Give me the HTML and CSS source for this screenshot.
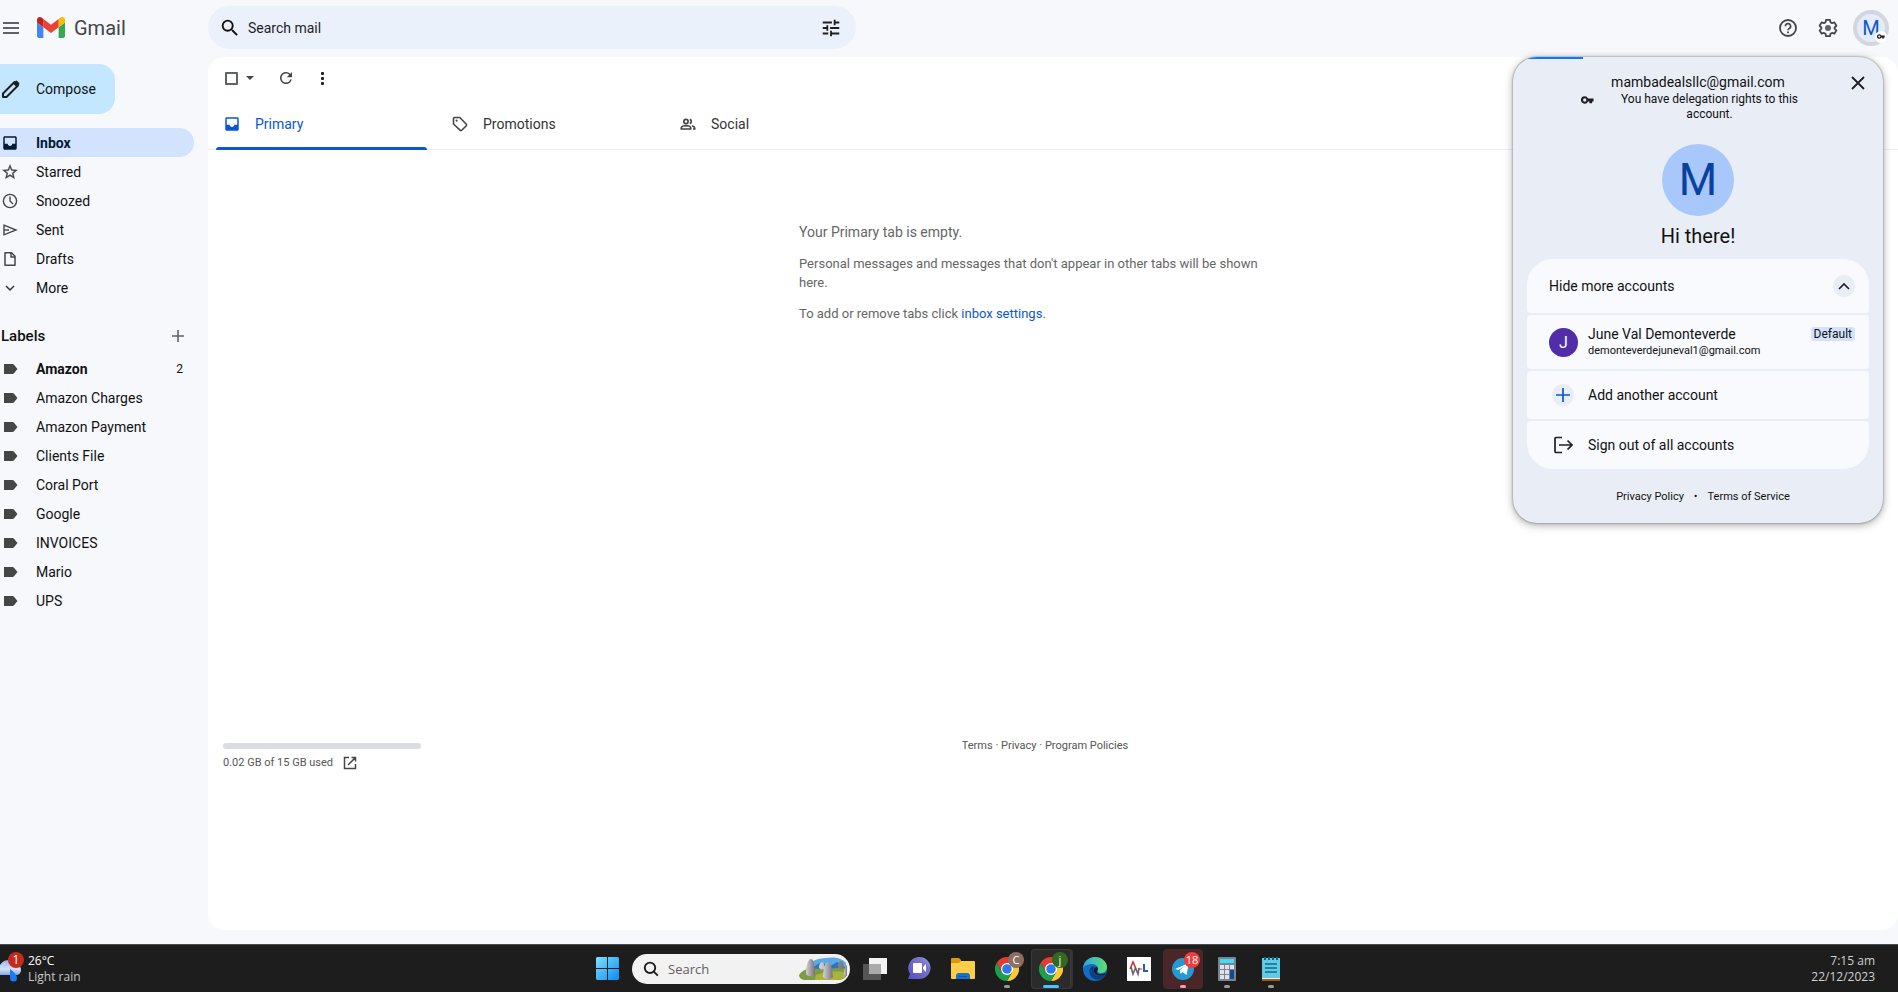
FILE: index.html
```html
<!DOCTYPE html>
<html lang="en">
<head>
<meta charset="utf-8">
<title>Gmail</title>
<link rel="stylesheet" href="styles.css">
</head>
<body>
<svg class="defs" aria-hidden="true">
  <defs>
    <symbol id="label" viewBox="0 0 18 18"><path d="M3 4h8.600c.6 0 1.100.3 1.400.8L16.500 9 13 13.200c-.3.500-.8.800-1.400.8H3V4z" fill="#444746"/></symbol>
    <symbol id="inbox" viewBox="0 0 24 24"><path d="M19 3H5c-1.100 0-2 .9-2 2v14c0 1.100.9 2 2 2h14c1.100 0 2-.9 2-2V5c0-1.100-.9-2-2-2zm0 10h-4c0 1.660-1.340 3-3 3s-3-1.340-3-3H5V5h14v8z" fill="currentColor"/></symbol>
    <symbol id="search" viewBox="0 0 24 24"><path d="M15.500 14h-.79l-.28-.27A6.471 6.471 0 0 0 16 9.500 6.500 6.500 0 1 0 9.500 16c1.610 0 3.090-.59 4.230-1.570l.27.28v.79l5 4.990L20.490 19l-4.990-5zm-6 0C7.010 14 5 11.990 5 9.500S7.010 5 9.500 5 14 7.010 14 9.500 11.990 14 9.500 14z" fill="currentColor"/></symbol>
    <symbol id="key" viewBox="0 0 14 8"><path d="M4 0a4 4 0 1 0 3.600 5.600H9V7.500h3V5.600h1.500V2.400H7.600A4 4 0 0 0 4 0zm0 2.200a1.800 1.800 0 1 1 0 3.600 1.800 1.800 0 0 1 0-3.600z" fill="#1f1f1f"/></symbol>
    <symbol id="chrome" viewBox="0 0 48 48">
      <path d="M24 12h20.800A24 24 0 0 0 3.200 12l10.400 18z" fill="#e33b2e"/>
      <path d="M34.400 30 24 48a24 24 0 0 0 20.800-36H24z" fill="#fcc934"/>
      <path d="M13.600 30 3.200 12A24 24 0 0 0 24 48l10.400-18z" fill="#1e9e48"/>
      <circle cx="24" cy="24" r="12" fill="#fff"/><circle cx="24" cy="24" r="9.500" fill="#2b79ea"/>
    </symbol>
  </defs>
</svg>
<div class="app">
  <header class="topbar">
    <div class="brand">
      <button class="plain" aria-label="Main menu"><svg width="18" height="18" viewBox="0 0 18 18"><path d="M1 4h16M1 9h16M1 14h16" stroke="#5f6368" stroke-width="2"/></svg></button>
      <a class="logo" href="#"><svg width="28" height="21" viewBox="52 42 88 66"><path fill="#4285f4" d="M58 108h14V74L52 59v43c0 3.320 2.690 6 6 6"/><path fill="#34a853" d="M120 108h14c3.320 0 6-2.690 6-6V59l-20 15"/><path fill="#fbbc04" d="M120 48v26l20-15v-8c0-7.420-8.470-11.650-14.400-7.200"/><path fill="#ea4335" d="M72 74V48l24 18 24-18v26L96 92"/><path fill="#c5221f" d="M52 51v8l20 15V48l-5.600-4.200c-5.940-4.450-14.400-.22-14.400 7.200"/></svg><span>Gmail</span></a>
    </div>
    <form class="search">
      <button class="plain" type="button" aria-label="Search"><svg width="22" height="22"><use href="#search"/></svg></button>
      <input type="text" placeholder="Search mail" aria-label="Search mail">
      <button class="plain" type="button" aria-label="Search options"><svg width="22" height="22" viewBox="0 0 24 24"><path d="M3 17v2h6v-2H3zM3 5v2h10V5H3zm10 16v-2h8v-2h-8v-2h-2v6h2zM7 9v2H3v2h4v2h2V9H7zm14 4v-2H11v2h10zm-6-4h2V7h4V5h-4V3h-2v6z" fill="#1f1f1f"/></svg></button>
    </form>
    <div class="tools">
      <button class="plain" aria-label="Support"><svg width="20" height="20" viewBox="0 0 20 20" fill="none" stroke="#444746"><circle cx="10" cy="10" r="8" stroke-width="1.800"/><path d="M7.400 8.200a2.600 2.600 0 1 1 3.900 2.200c-.9.600-1.300 1-1.300 1.900" stroke-width="1.700"/><path d="M10 13.400v1.800" stroke-width="1.800"/></svg></button>
      <button class="plain" aria-label="Settings"><svg width="20" height="20" viewBox="0 0 20 20"><path d="M8 1.900h4l.5 2.400 1.500.9 2.400-.8 2 3.400-1.800 1.700v1.200l1.800 1.600-2 3.400-2.400-.8-1.500.9-.5 2.400H8l-.5-2.400-1.500-.9-2.400.8-2-3.400 1.800-1.600V9.500L1.600 7.800l2-3.400 2.400.8 1.500-.9z" fill="none" stroke="#444746" stroke-width="1.800" stroke-linejoin="round"/><circle cx="10" cy="10" r="3" fill="#5f6368"/></svg></button>
      <button class="avatar-btn" aria-label="Google Account">M<span class="key-badge"><svg width="8" height="5"><use href="#key"/></svg></span></button>
    </div>
  </header>

  <div class="body">
    <nav class="side">
      <button class="compose"><svg width="20" height="20" viewBox="0 0 20 20"><path d="M2 18v-3.500L13.500 3l3.500 3.500L5.500 18z" fill="none" stroke="#1f1f1f" stroke-width="2" stroke-linejoin="round"/><path d="m12 4.500 2.500-2.500a1.300 1.300 0 0 1 1.800 0L18 3.700a1.300 1.300 0 0 1 0 1.800L15.500 8z" fill="#1f1f1f"/></svg>Compose</button>
      <ul class="list">
        <li><a class="row active" href="#"><svg width="18" height="18"><use href="#inbox"/></svg>Inbox</a></li>
        <li><a class="row" href="#"><svg width="18" height="18" viewBox="0 0 24 24"><path d="m22 9.240-7.190-.62L12 2 9.190 8.630 2 9.240l5.460 4.730L5.820 21 12 17.270 18.180 21l-1.630-7.030L22 9.240zM12 15.400l-3.760 2.270 1-4.280-3.320-2.880 4.380-.38L12 6.100l1.710 4.040 4.380.38-3.320 2.880 1 4.280L12 15.400z" fill="#444746" stroke="#444746" stroke-width=".4"/></svg>Starred</a></li>
        <li><a class="row" href="#"><svg width="18" height="18" viewBox="0 0 18 18" fill="none" stroke="#444746"><circle cx="9" cy="9" r="6.600" stroke-width="1.400"/><path d="M9 4.500V9l3 3" stroke-width="1.400"/></svg>Snoozed</a></li>
        <li><a class="row" href="#"><svg width="18" height="18" viewBox="0 0 18 18" fill="none" stroke="#444746" stroke-width="1.400"><path d="M3 4.200 15 9 3 13.800z"/><path d="M3 9h5"/></svg>Sent</a></li>
        <li><a class="row" href="#"><svg width="18" height="18" viewBox="0 0 18 18" fill="none" stroke="#444746" stroke-width="1.500"><path d="M4 2.800h6.500L14 6.200v9H4z" stroke-linejoin="round"/><path d="M10 3v4h4"/></svg>Drafts</a></li>
        <li><a class="row" href="#"><svg width="18" height="18" viewBox="0 0 18 18" fill="none" stroke="#333" stroke-width="1.500"><path d="m5 7 4 4 4-4"/></svg>More</a></li>
      </ul>
      <div class="labels-head"><h2>Labels</h2><button class="plain" aria-label="Create new label"><svg width="12" height="12" viewBox="0 0 12 12"><path d="M6 0v12M0 6h12" stroke="#5f6368" stroke-width="1.600"/></svg></button></div>
      <ul class="list">
        <li><a class="row unread" href="#"><svg width="18" height="18"><use href="#label"/></svg>Amazon<span class="count">2</span></a></li>
        <li><a class="row" href="#"><svg width="18" height="18"><use href="#label"/></svg>Amazon Charges</a></li>
        <li><a class="row" href="#"><svg width="18" height="18"><use href="#label"/></svg>Amazon Payment</a></li>
        <li><a class="row" href="#"><svg width="18" height="18"><use href="#label"/></svg>Clients File</a></li>
        <li><a class="row" href="#"><svg width="18" height="18"><use href="#label"/></svg>Coral Port</a></li>
        <li><a class="row" href="#"><svg width="18" height="18"><use href="#label"/></svg>Google</a></li>
        <li><a class="row" href="#"><svg width="18" height="18"><use href="#label"/></svg>INVOICES</a></li>
        <li><a class="row" href="#"><svg width="18" height="18"><use href="#label"/></svg>Mario</a></li>
        <li><a class="row" href="#"><svg width="18" height="18"><use href="#label"/></svg>UPS</a></li>
      </ul>
    </nav>

    <main class="mail">
      <div class="toolbar">
        <input type="checkbox" class="check" aria-label="Select all">
        <button class="plain caret" aria-label="Select"><svg width="8" height="4" viewBox="0 0 8 4"><path d="M0 0h8L4 4z" fill="#444746"/></svg></button>
        <button class="plain refresh" aria-label="Refresh"><svg width="18" height="18" viewBox="0 0 24 24"><path d="M17.650 6.350A7.958 7.958 0 0 0 12 4c-4.420 0-7.990 3.580-7.990 8s3.570 8 7.990 8c3.730 0 6.840-2.550 7.730-6h-2.080A5.990 5.990 0 0 1 12 18c-3.310 0-6-2.690-6-6s2.690-6 6-6c1.660 0 3.140.69 4.220 1.780L13 11h7V4l-2.350 2.350z" fill="#444746"/></svg></button>
        <button class="plain more" aria-label="More"><svg width="18" height="18" viewBox="0 0 18 18" fill="#1f1f1f"><rect x="8" y="3" width="3" height="3" rx="1"/><rect x="8" y="8" width="3" height="3" rx="1"/><rect x="8" y="13" width="3" height="3" rx="1"/></svg></button>
      </div>
      <div class="tabs" role="tablist">
        <button class="tab selected" role="tab" aria-selected="true"><svg width="18" height="18"><use href="#inbox"/></svg>Primary</button>
        <button class="tab" role="tab"><svg width="18" height="18" viewBox="0 0 18 18"><path d="M2.500 3.500a1 1 0 0 1 1-1h5.300l6.500 6.800a1 1 0 0 1 0 1.400l-4.600 4.600a1 1 0 0 1-1.400 0L2.500 9z" fill="none" stroke="#444746" stroke-width="1.600"/><circle cx="5.600" cy="5.600" r="1.100" fill="#444746"/></svg>Promotions</button>
        <button class="tab" role="tab"><svg width="18" height="18" viewBox="0 0 18 18" fill="none" stroke="#444746" stroke-width="1.700"><circle cx="7" cy="6.500" r="2.100"/><path d="M2.300 14v-1.200c0-1.300 2.600-2.200 4.700-2.200s4.700.9 4.700 2.200V14z"/><path d="M10.800 4.400a2.200 2.200 0 0 1 0 4.200M13 10.800c1.500.5 2.700 1.100 2.700 2.100V14H14"/></svg>Social</button>
      </div>
      <div class="content">
        <section class="empty">
          <h1>Your Primary tab is empty.</h1>
          <p>Personal messages and messages that don't appear in other tabs will be shown here.</p>
          <p>To add or remove tabs click <a href="#">inbox settings</a>.</p>
        </section>
        <footer class="foot">
          <div class="storage">
            <div class="bar"></div>
            <a href="#">0.02 GB of 15 GB used <svg width="14" height="14" viewBox="0 0 14 14" fill="none" stroke="#444746" stroke-width="1.500"><path d="M6 1.500H1.500v11h11V8M8.500 1.500h4v4M12.500 1.500 5 9"/></svg></a>
          </div>
          <div class="legal"><a href="#">Terms</a> · <a href="#">Privacy</a> · <a href="#">Program Policies</a></div>
        </footer>
      </div>
    </main>
  </div>

  <section class="panel" aria-label="Account">
    <div class="progress"></div>
    <button class="plain close" aria-label="Close"><svg width="14" height="14" viewBox="0 0 14 14"><path d="m1 1 12 12M13 1 1 13" stroke="#1f1f1f" stroke-width="1.800"/></svg></button>
    <div class="email">mambadealsllc@gmail.com</div>
    <div class="delegate"><svg width="13" height="8"><use href="#key"/></svg><p>You have delegation rights to this account.</p></div>
    <div class="big-avatar">M</div>
    <div class="hi">Hi there!</div>
    <div class="cards">
      <button class="card tall">Hide more accounts<span class="round end"><svg width="12" height="8" viewBox="0 0 12 8"><path d="m1 7 5-5 5 5" fill="none" stroke="#1f1f1f" stroke-width="1.700"/></svg></span></button>
      <a class="card tall account" href="#"><span class="initial">J</span><span class="who"><span>June Val Demonteverde</span><small>demonteverdejuneval1@gmail.com</small></span><span class="default">Default</span></a>
      <a class="card" href="#"><span class="slot"><span class="round"><svg width="14" height="14" viewBox="0 0 14 14"><path d="M7 0v14M0 7h14" stroke="#0b57d0" stroke-width="1.700"/></svg></span></span>Add another account</a>
      <a class="card" href="#"><span class="slot"><svg width="20" height="18" viewBox="0 0 20 18" fill="none" stroke="#1f1f1f" stroke-width="1.700"><path d="M9 1.500H3a1 1 0 0 0-1 1v13a1 1 0 0 0 1 1h6M6 9h12.500M14.500 4.500 19 9l-4.500 4.500"/></svg></span>Sign out of all accounts</a>
    </div>
    <div class="panel-foot"><a href="#">Privacy Policy</a><span>•</span><a href="#">Terms of Service</a></div>
  </section>

  <footer class="taskbar">
    <button class="weather">
      <span class="cloud"><svg width="24" height="30" viewBox="0 0 24 30"><defs><linearGradient id="cl" x2="0" y2="1"><stop stop-color="#93b8f0"/><stop offset=".6" stop-color="#d5e3f9"/><stop offset="1" stop-color="#7fa8ee"/></linearGradient></defs><path d="M0 11C3 6 8 5 12 8c3 1 9 2 9 8 0 3-2 5-5 5H0z" fill="url(#cl)"/><path d="M10 15c4 3 7 6 7 9a3.500 3.500 0 0 1-7 0z" fill="#1a7cf5"/></svg><b class="alert">1</b></span>
      <span class="temp"><span>26°C</span><span class="dim">Light rain</span></span>
    </button>
    <div class="dock">
      <button class="app-btn" aria-label="Start"><svg width="23" height="23" viewBox="0 0 23 23"><defs><linearGradient id="win" x2="1" y2="1"><stop stop-color="#7fe0ff"/><stop offset="1" stop-color="#0a8cf2"/></linearGradient></defs><path d="M1 0h10v11H0V1zM12 0h10l1 1v10H12zM0 12h11v11H1l-1-1zM12 12h11v10l-1 1H12z" fill="url(#win)"/></svg></button>
      <label class="task-search"><svg width="16" height="16" viewBox="0 0 16 16" fill="none" stroke="#1d1d1d" stroke-width="1.900"><circle cx="7" cy="6.800" r="5.200"/><path d="m10.800 10.600 4 4"/></svg><input type="text" placeholder="Search" aria-label="Search">
        <svg width="50" height="24" viewBox="0 0 50 24"><defs><linearGradient id="rock" x2="1"><stop stop-color="#d5d0d4"/><stop offset="1" stop-color="#77717a"/></linearGradient></defs><path d="M8 12C14 1 22 2 28 1s15-1 20 5v10H9z" fill="#5aaae8"/><path d="m14 11 9-6 8 5 8-5 9 6v5H14z" fill="#3175b8"/><path d="M1 18C5 12 12 10 20 12s18-3 29 0v6c-2 4-6 5-10 5H8c-4 0-7-2-7-5z" fill="#7e9c45"/><path d="M18 18c9-4 20-4 31-3-1 5-5 8-10 8H17z" fill="#a9b53a"/><g fill="url(#rock)"><path d="M8 17c0-8 2-15 5-15s4 8 4 15c-2 3-7 3-9 0z"/><path d="M21 11c0-4 1-6 3-6s2 3 3 6c-2 2-4 2-6 0zM40 10c0-4 1-6 3-6s2 3 3 6c-2 2-4 2-6 0z"/><path d="M25 20c0-8 2-15 5-15s4 7 5 15c-3 3-7 3-10 0z"/><path d="M46 17c0-5 1-8 3-9v11c-2 0-3 0-3-2z"/></g></svg></label>
      <button class="app-btn" aria-label="Task view"><svg width="24" height="22" viewBox="0 0 24 22"><path d="M6 0h18v16H6z" fill="#f3f3f3"/><path d="M0 6h18v16H0z" fill="#555"/><path d="M6 6h12v10H6z" fill="#aaa"/></svg></button>
      <button class="app-btn" aria-label="Chat"><svg width="23" height="23" viewBox="0 0 23 23"><defs><linearGradient id="ch" x1="1" x2="0" y2="1"><stop stop-color="#7db0f0"/><stop offset=".3" stop-color="#7e74c8"/><stop offset="1" stop-color="#5450c8"/></linearGradient></defs><path d="M11.500 0a11 11 0 0 1 0 22H0l2-5A11 11 0 0 1 11.500 0z" fill="url(#ch)"/><rect x="5" y="6" width="9" height="10" rx="1" fill="#fff"/><path d="m15 10 3-3v8l-3-3z" fill="#fff"/></svg></button>
      <button class="app-btn" aria-label="File Explorer"><svg width="24" height="22" viewBox="0 0 24 22"><path d="M0 1q0-1 1-1h7l2 2v5H0z" fill="#d99a09"/><path d="M0 5h8l2-2h13q1 0 1 1v16q0 1-1 1H1q-1 0-1-1z" fill="#fdcf48"/><path d="M5 21v-3q0-3 3-3h8q3 0 3 3v3z" fill="#1873c8"/><path d="M8 18h8v1H8z" fill="#0c59a0"/></svg></button>
      <button class="app-btn" aria-label="Chrome, profile C"><svg width="24" height="24"><use href="#chrome"/></svg><b class="badge brown">C</b><i class="dot"></i></button>
      <button class="app-btn stacked" aria-label="Chrome, profile j"><svg width="24" height="24"><use href="#chrome"/></svg><b class="badge green">j</b><i class="dot wide"></i></button>
      <button class="app-btn" aria-label="Edge"><svg width="24" height="24" viewBox="0 0 24 24"><defs><linearGradient id="eg" x2="1"><stop stop-color="#2aa5e5"/><stop offset="1" stop-color="#5edf6d"/></linearGradient></defs><circle cx="12" cy="12" r="12" fill="#126cc4"/><path d="M0 11C1 4 6 0 12 0c7 0 12 5 12 10 0 4-3 6-6 6-2 0-4-1-3-3 1-3-2-6-6-6-4 0-7 1-9 4z" fill="url(#eg)"/><path d="M8 10c-3 3-2 9 3 12 4 2 9 0 11-4-4 2-9 1-11-2-1-2-1-4 1-6-1-1-3-1-4 0z" fill="#0b3f85"/><path d="M14 10c1 1 1 3 0 4-1 2 2 4 5 3 2 0 3-1 4-1l-1 2c-5 2-10 0-11-3s1-5 3-5z" fill="#1d1d1d"/></svg></button>
      <button class="app-btn" aria-label="AWL"><svg width="24" height="24" viewBox="0 0 24 24" fill="none"><path d="M0 0h24v24H0z" fill="#fff"/><path d="m3 12 3-7 3 7" stroke="#d32b35" stroke-width="1.500"/><path d="m4 10 2 7 2.500-6 2.500 6 1-6" stroke="#666" stroke-width="1.600"/><path d="M17 7v7h4" stroke="#2b59b5" stroke-width="2"/><path d="M11 12h4" stroke="#d32b35"/></svg></button>
      <button class="app-btn warn" aria-label="Telegram"><svg width="24" height="24" viewBox="0 0 24 24"><circle cx="12" cy="12" r="11" fill="#229ad6"/><path d="m4 12 14-6-2.500 12-4-3-2 2-.6-4 5-4-6.500 4z" fill="#fff"/></svg><b class="badge red">18</b><i class="dot"></i></button>
      <button class="app-btn" aria-label="Calculator"><svg width="18" height="24" viewBox="0 0 18 24"><rect width="18" height="24" rx="1" fill="#7b8490"/><path d="M2 2h14v4H2z" fill="#42dcf7"/><path d="M2 8h4v4H2zm5 0h4v4H7zm5 0h4v4h-4zM2 13h4v4H2zm5 0h4v4H7zM2 18h4v4H2zm5 0h4v4H7z" fill="#dfe3e8"/><path d="M12 13h4v9h-4z" fill="#124a94"/></svg><i class="dot"></i></button>
      <button class="app-btn" aria-label="Notepad"><svg width="18" height="24" viewBox="0 0 18 24"><path d="M0 1h18v20H0z" fill="#62cbe6"/><path d="M2 0h2v3H2zm4 0h2v3H6zm4 0h2v3h-2zm4 0h2v3h-2z" fill="#0f5f83"/><path d="M3 7h12M3 11h12M3 15h12" stroke="#156a8c" stroke-width="1.500"/><path d="M0 21h18v2H0z" fill="#f0f0f0"/><path d="M0 22h18v2H0z" fill="#a8571b"/></svg><i class="dot"></i></button>
    </div>
    <button class="clock"><span>7:15 am</span><span>22/12/2023</span></button>
  </footer>
</div>
</body>
</html>
```
FILE: styles.css
```css
* { box-sizing: border-box; }
body { margin: 0; font-family: Roboto, "Liberation Sans", sans-serif; font-size: 14px; color: #111; background: #f6f8fc; }
button, input { font: inherit; color: inherit; }
button { border: 0; background: none; padding: 0; cursor: pointer; }
a { color: inherit; text-decoration: none; }
svg { display: block; flex: none; }
ul, h1, h2, p { margin: 0; padding: 0; list-style: none; font-weight: 400; }
.defs { position: absolute; width: 0; height: 0; }
.plain { display: flex; align-items: center; justify-content: center; }

.app { position: relative; display: flex; flex-direction: column; min-height: 100vh; }

.topbar { display: flex; align-items: flex-start; height: 57px; padding-top: 6px; }
.brand { display: flex; align-items: center; gap: 17px; width: 208px; height: 43px; padding-left: 2px; }
.logo { display: flex; align-items: center; gap: 9px; font-size: 20px; color: #444746; }
.search { display: flex; align-items: center; flex: 0 1 648px; height: 43px; padding: 0 14px 0 11px; border-radius: 22px; background: #eaf1fb; }
.search input { flex: 1; min-width: 0; margin-left: 7px; padding: 0; border: 0; outline: 0; background: none; font-size: 14px; }
.search input::placeholder { color: #1f1f1f; opacity: 1; }
.tools { display: flex; align-items: center; gap: 20px; height: 43px; margin-left: auto; padding-right: 9px; }
.avatar-btn { position: relative; width: 36px; height: 36px; margin-left: -5px; border: 4px solid #d3d6db; border-radius: 50%; background: #e4ecfb; color: #0b57d0; font-size: 20px; line-height: 28px; }
.key-badge { position: absolute; right: -2px; bottom: -1px; display: flex; align-items: center; justify-content: center; width: 12px; height: 12px; border-radius: 50%; background: #fff; }

.body { display: flex; flex: 1; padding-bottom: 14px; }
.side { width: 208px; flex: none; padding-top: 7px; }
.compose { display: flex; align-items: center; gap: 15px; width: 115px; height: 50px; padding-left: 1px; border-radius: 0 16px 16px 0; background: #c2e7ff; }
.compose + .list { padding-top: 14px; }
.row { display: flex; align-items: center; gap: 17px; width: 194px; height: 29px; padding: 0 11px 0 1px; border-radius: 0 15px 15px 0; }
.row.active { background: #d3e3fd; color: #001d35; font-weight: 700; }
.row.unread { font-weight: 700; }
.count { margin-left: auto; font-size: 12px; font-weight: 400; }
.labels-head { display: flex; align-items: center; justify-content: space-between; width: 194px; height: 52px; padding: 16px 10px 0 1px; }
.labels-head h2 { font-size: 15px; font-weight: 500; }

.mail { flex: 1; min-width: 0; border-radius: 16px; background: #fff; }
.toolbar { display: flex; align-items: center; height: 42px; padding-left: 17px; }
.check { appearance: none; width: 13px; height: 13px; margin: 0; border: 2px solid #5f6368; border-radius: 1px; }
.caret { margin-left: 8px; }
.refresh { margin-left: 23px; }
.more { margin-left: 18px; }
.tabs { display: flex; height: 51px; padding-left: 8px; border-bottom: 1px solid #eceff1; }
.tab { position: relative; display: flex; align-items: center; gap: 14px; width: 211px; margin-right: 17px; padding: 0 0 0 7px; color: #333; }
.tab.selected { color: #0b57d0; }
.tab.selected::after { content: ""; position: absolute; left: 0; right: 0; bottom: -1px; height: 3px; border-radius: 3px 3px 0 0; background: #0b57d0; }

.content { padding: 0 16px 0 0; }
.empty { width: 492px; min-height: 593px; margin: 0 auto; padding: 72px 16px 0 0; color: #666; font-size: 13px; line-height: 19px; }
.empty h1 { font-size: 14px; line-height: 20px; }
.empty p { margin-top: 12px; }
.empty a { color: #0b57d0; }
.foot { display: grid; grid-template-columns: 1fr auto 1fr; font-size: 11px; color: #555; }
.storage { padding-left: 15px; }
.bar { width: 198px; height: 6px; border-radius: 3px; background: #dadce0; }
.storage a { display: flex; align-items: center; gap: 10px; margin-top: 6px; line-height: 16px; }
.legal { line-height: 6px; }

.panel { position: absolute; top: 57px; right: 15px; width: 370px; padding: 16px 14px 18px; overflow: hidden; border-radius: 24px; background: #e9eef6; box-shadow: 0 0 2px rgba(0,0,0,.5), 0 2px 8px rgba(0,0,0,.35); text-align: center; }
.progress { position: absolute; top: 0; left: 0; width: 70px; height: 2px; background: #0b7bef; }
.close { position: absolute; top: 19px; right: 18px; }
.email { font-size: 14px; line-height: 18px; }
.delegate { display: flex; align-items: flex-start; gap: 20px; margin-top: 1px; padding: 0 64px 0 54px; font-size: 12px; line-height: 15px; }
.delegate svg { margin-top: 4px; }
.delegate p { flex: 1; }
.big-avatar { width: 72px; height: 72px; margin: 22px auto 0; border-radius: 50%; background: #a8c7fa; color: #0842a0; font-size: 44px; line-height: 72px; }
.hi { margin-top: 6px; font-size: 20px; line-height: 28px; }
.cards { display: flex; flex-direction: column; gap: 2px; margin-top: 9px; }
.card { display: flex; align-items: center; height: 48px; padding: 0 14px 0 22px; border-radius: 4px; background: #f8fafd; text-align: left; }
.card.tall { height: 54px; }
.card:first-child { border-top-left-radius: 26px; border-top-right-radius: 26px; }
.card:last-child { border-bottom-left-radius: 26px; border-bottom-right-radius: 26px; }
.round { display: flex; align-items: center; justify-content: center; width: 22px; height: 22px; border-radius: 50%; background: #e9eef6; }
.round.end { margin-left: auto; }
.initial { width: 29px; height: 29px; border-radius: 50%; background: #512da8; color: #fff; font-size: 16px; line-height: 29px; text-align: center; }
.who { display: flex; flex-direction: column; flex: 1; margin-left: 10px; line-height: 18px; }
.who small { font-size: 11px; line-height: 16px; }
.default { align-self: flex-start; margin-top: 12px; padding: 0 3px; border-radius: 3px; background: #d3e3fd; font-size: 12px; line-height: 14px; }
.slot { display: flex; justify-content: center; width: 27px; margin-right: 12px; }
.panel-foot { display: flex; justify-content: center; gap: 10px; margin-top: 20px; padding-left: 10px; font-size: 11px; line-height: 16px; }

.taskbar { display: grid; grid-template-columns: 1fr auto 1fr; height: 48px; padding-right: 20px; border-top: 1px solid #474b4b; background: #1d1d1d; color: #fff; font-family: "Open Sans", "Noto Sans", sans-serif; font-size: 12px; line-height: 16px; }
.weather { display: flex; align-items: center; gap: 4px; justify-self: start; text-align: left; }
.cloud { position: relative; }
.alert { position: absolute; top: -2px; left: 8px; width: 16px; height: 16px; border-radius: 50%; background: #c42b1c; font-weight: 400; text-align: center; }
.temp, .clock { display: flex; flex-direction: column; }
.dim { color: #c8c8c8; }
.clock { justify-self: end; align-items: flex-end; justify-content: center; padding-right: 3px; color: #d0d0d0; }
.dock { display: flex; align-items: center; }
.app-btn { position: relative; display: flex; align-items: center; justify-content: center; width: 40px; height: 40px; margin: 0 2px; border-radius: 4px; }
.stacked { background: #2b2b2b; box-shadow: inset 0 0 0 1px #3a3a3a, 2px 0 0 #333; }
.warn { background: #4a2628; }
.task-search { display: flex; align-items: center; width: 218px; height: 30px; margin: 0 3px; padding: 0 2px 0 11px; border-radius: 15px; background: #f2f2f2; color: #1f1f1f; }
.task-search input { flex: 1; min-width: 0; margin-left: 9px; padding: 0; border: 0; outline: 0; background: none; font-size: 13px; }
.task-search input::placeholder { color: #606060; opacity: 1; }
.badge { position: absolute; top: 3px; right: 3px; width: 16px; height: 16px; border-radius: 50%; font-size: 11px; font-weight: 400; line-height: 15px; text-align: center; }
.brown { background: #8d6e63; }
.green { background: #33691e; }
.red { background: #f23c3c; }
.dot { position: absolute; bottom: 1px; left: 50%; width: 6px; height: 3px; margin-left: -3px; border-radius: 2px; background: #9a9a9a; }
.dot.wide { width: 16px; margin-left: -8px; background: #4cc2ff; }
.warn .dot { background: #ff99a4; }
```
